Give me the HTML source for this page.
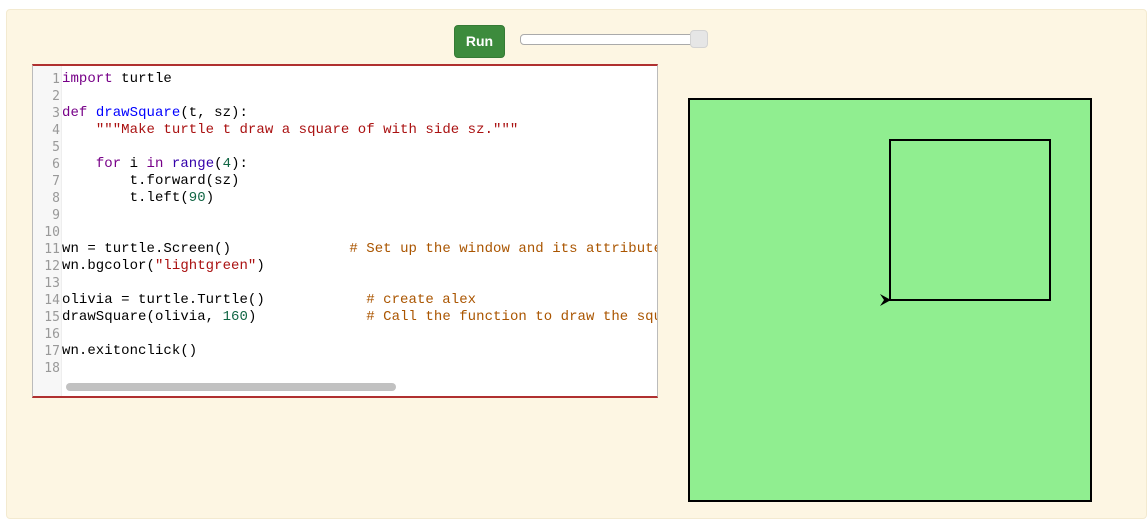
<!DOCTYPE html>
<html><head><style>
body{margin:0;width:1147px;height:531px;background:#fff;position:relative;overflow:hidden;font-family:"Liberation Sans",sans-serif}
.outer{position:absolute;left:6px;top:9px;width:1139px;height:508px;background:#fdf6e3;border:1px solid #f3ead0;border-radius:4px}
.run{position:absolute;left:454px;top:25px;width:51px;height:33px;background:#3d8b3d;border:1px solid #357a35;border-radius:4px;box-sizing:border-box;color:#fff;font-size:14px;font-weight:bold;line-height:31px;text-align:center}
.track{position:absolute;left:520px;top:34px;width:180px;height:11px;background:#fff;border:1px solid #aaa;border-radius:4px;box-sizing:border-box}
.thumb{position:absolute;left:690px;top:30px;width:18px;height:18px;background:#e6e6e6;border:1px solid #d3d3d3;border-radius:4px;box-sizing:border-box}
.ed{position:absolute;left:32px;top:64px;width:626px;height:334px;background:#fff;border:1px solid #bbb;border-top:2px solid #b03030;border-bottom:2px solid #b03030;box-sizing:border-box;overflow:hidden}
.gut{position:absolute;left:0;top:0;width:28px;height:100%;background:#f7f7f7;border-right:1px solid #eee}
pre{margin:0;position:absolute;top:5px;font-family:"Liberation Mono",monospace;font-size:14px;line-height:17px;letter-spacing:0.05px}
.ln{left:0;width:27px;text-align:right;color:#999;font-size:13px;font-family:"DejaVu Sans Mono",monospace}
.code{left:29px;color:#000}
.k{color:#708}.d{color:#00f}.s{color:#a11}.n{color:#164}.c{color:#a50}.b{color:#30a}
.sb{position:absolute;left:33px;top:317px;width:330px;height:8px;border-radius:4px;background:#c1c1c1}
.cv{position:absolute;left:688px;top:98px;width:404px;height:404px;background:#90ee90;border:2px solid #000;box-sizing:border-box}
</style></head><body>
<div class="outer"></div>
<div class="run">Run</div>
<div class="track"></div><div class="thumb"></div>
<div class="ed"><div class="gut"></div>
<pre class="ln">1
2
3
4
5
6
7
8
9
10
11
12
13
14
15
16
17
18</pre>
<pre class="code"><span class="k">import</span> turtle

<span class="k">def</span> <span class="d">drawSquare</span>(t, sz):
    <span class="s">"""Make turtle t draw a square of with side sz."""</span>

    <span class="k">for</span> i <span class="k">in</span> <span class="b">range</span>(<span class="n">4</span>):
        t.forward(sz)
        t.left(<span class="n">90</span>)


wn = turtle.Screen()              <span class="c"># Set up the window and its attributes</span>
wn.bgcolor(<span class="s">"lightgreen"</span>)

olivia = turtle.Turtle()            <span class="c"># create alex</span>
drawSquare(olivia, <span class="n">160</span>)             <span class="c"># Call the function to draw the square</span>

wn.exitonclick()
</pre>
<div class="sb"></div>
</div>
<div class="cv">
<svg width="400" height="400" style="position:absolute;left:0;top:0">
<path d="M200 200 H360 V40 H200 Z" fill="none" stroke="#000" stroke-width="2"/>
<path d="M201 200 L190 194 L194 200 L190 206 Z" fill="#000"/>
</svg></div>
</body></html>
